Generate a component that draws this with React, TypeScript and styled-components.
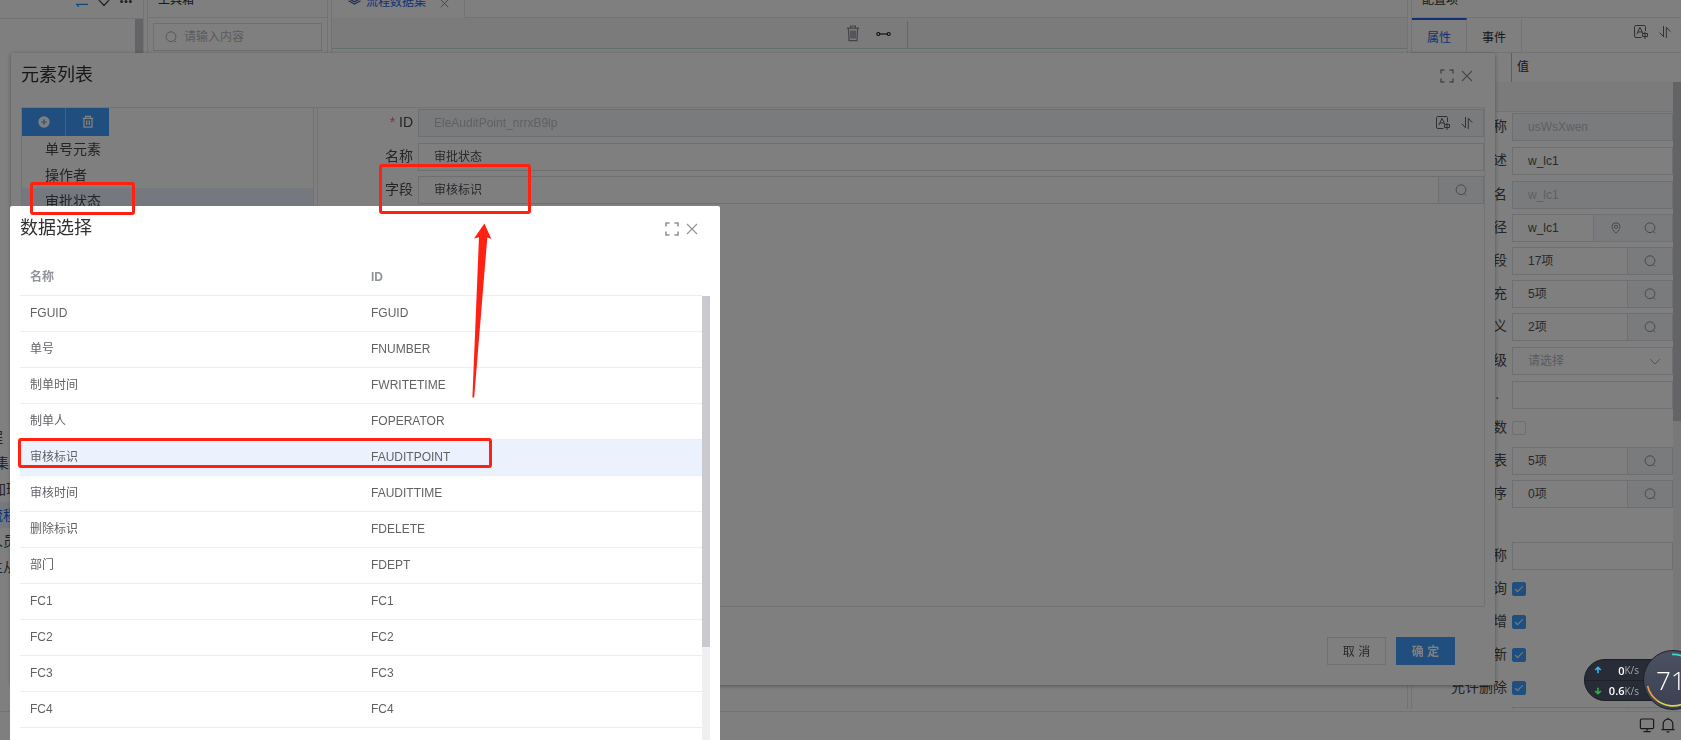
import React from 'react';
import styled, { createGlobalStyle, css } from 'styled-components';

const line = '#e4e7ed';
const fieldLine = '#dcdfe6';
const primary = '#409eff';
const accent = '#1e62eb';
const mark = '#ff2213';

const GlobalStyle = createGlobalStyle`
  *, *::before, *::after { box-sizing: border-box; }
  body {
    margin: 0;
    overflow: hidden;
    background: #fff;
    color: #303133;
    font-family: "Liberation Sans", "Noto Sans CJK SC", sans-serif;
    font-size: 12px;
  }
  button, input, select { font: inherit; color: inherit; margin: 0; }
  svg { display: block; flex: none; }
`;

const Shell = styled.div`
  display: flex;
  flex-direction: column;
  height: 100vh;
`;

const Workbench = styled.main`
  flex: 1;
  min-height: 0;
  display: flex;
  gap: 3px;
  padding-bottom: 2px;
`;

const Panel = styled.section<{ $width?: number; $edges: 'right' | 'both' | 'left' }>`
  display: flex;
  flex-direction: column;
  min-width: 0;
  overflow: hidden;
  ${(p) => (p.$width ? css`flex: none; width: ${p.$width}px;` : css`flex: 1;`)}
  ${(p) => p.$edges !== 'left' && css`border-right: 1px solid ${line};`}
  ${(p) => p.$edges !== 'right' && css`border-left: 1px solid ${line};`}
`;

const PanelHeader = styled.header<{ $tall?: boolean }>`
  flex: none;
  display: flex;
  align-items: flex-end;
  height: ${(p) => (p.$tall ? 19 : 18)}px;
  padding: 0 10px 10px;
  line-height: 14px;
  border-bottom: 1px solid ${line};
  overflow: hidden;
`;

const HeaderActions = styled.div`
  display: flex;
  align-items: flex-end;
  gap: 10px;
  margin-left: 66px;
  padding-bottom: 1px;
`;

const TreeArea = styled.div`
  flex: 1;
  min-height: 0;
  display: flex;
  justify-content: space-between;
  overflow: hidden;
`;

const TreeList = styled.ul`
  flex: 1;
  list-style: none;
  margin: 405px 0 0 -11px;
  padding: 0;
  font-size: 14px;
  color: #46484c;
`;

const TreeItem = styled.li<{ $indent?: number; $active?: boolean }>`
  height: 26px;
  line-height: 26px;
  white-space: nowrap;
  padding-left: ${(p) => p.$indent || 0}px;
  ${(p) => p.$active && css`background: #eaf2ff; color: ${accent};`}
`;

const ScrollTrack = styled.div<{ $top?: number }>`
  flex: none;
  width: 8px;
  margin-top: ${(p) => p.$top || 0}px;
  background: #f0f0f2;
`;

const ScrollThumb = styled.div<{ $length: number }>`
  height: ${(p) => p.$length}%;
  background: #c9c9cf;
`;

const SearchBox = styled.label`
  display: flex;
  align-items: center;
  gap: 6px;
  height: 28px;
  margin: 5px;
  padding: 0 10px;
  border: 1px solid ${fieldLine};
  color: #a8abb2;
`;

const BareInput = styled.input`
  flex: 1;
  min-width: 0;
  padding: 0;
  border: 0;
  outline: 0;
  background: none;
  line-height: 14px;
  &::placeholder { color: #b4b7be; }
`;

const TabStrip = styled.div`
  flex: none;
  display: flex;
  height: 18px;
`;

const FileTab = styled.button`
  display: flex;
  align-items: flex-end;
  gap: 4px;
  height: 18px;
  padding: 0 15px 9px;
  line-height: 14px;
  border: 0;
  border-right: 1px solid ${line};
  background: #fff;
  color: ${accent};
  white-space: nowrap;
`;

const TabClose = styled.span`
  margin-left: 10px;
  padding-bottom: 1px;
  color: #4080e0;
`;

const StripFill = styled.div`
  flex: 1;
  border-bottom: 1px solid ${line};
`;

const Toolbar = styled.div`
  flex: none;
  display: flex;
  justify-content: center;
  align-items: center;
  gap: 16px;
  height: 31px;
  padding: 3px 0 0 14px;
  background: #f7f7f7;
  border-bottom: 1px solid #cbd8df;
`;

const ToolButton = styled.button`
  display: flex;
  padding: 0 0 2px;
  border: 0;
  background: none;
  color: #444;
`;

const ToolDivider = styled.span`
  align-self: stretch;
  width: 1px;
  background: #c4ccd0;
`;

const PropTabs = styled.div`
  flex: none;
  display: flex;
  align-items: stretch;
  height: 35px;
  border-bottom: 1px solid ${line};
`;

const PropTab = styled.button<{ $active?: boolean }>`
  padding: 0 15px;
  border: 0;
  border-top: 2px solid ${(p) => (p.$active ? accent : 'transparent')};
  border-right: 1px solid ${line};
  background: none;
  color: ${(p) => (p.$active ? accent : '#303133')};
`;

const TabTools = styled.div`
  display: flex;
  align-items: center;
  gap: 10px;
  margin-left: auto;
  padding: 0 10px 6px 0;
  color: #606266;
`;

const ColumnTitles = styled.div`
  flex: none;
  display: grid;
  grid-template-columns: 100px 1fr;
  height: 29px;
  line-height: 28px;
`;

const ColumnTitle = styled.div`
  padding-left: 5px;
  &:first-child { border-right: 1px solid #bbb; }
`;

const PropBody = styled.div`
  flex: 1;
  min-height: 0;
  display: flex;
  overflow: hidden;
`;

const PropForm = styled.form`
  flex: 1;
  min-width: 0;
`;

const GroupBar = styled.div`
  height: 30px;
  background: #f7f7f7;
  border-bottom: 1px solid ${line};
`;

const GroupSpace = styled.div`
  height: 28px;
`;

const Row = styled.div<{ $plain?: boolean }>`
  display: grid;
  grid-template-columns: 95px minmax(0, 1fr);
  column-gap: 5px;
  padding: ${(p) => (p.$plain ? '1px 0 5px' : '0 0 5px')};
`;

const RowLabel = styled.label`
  font-size: 14px;
  line-height: 27px;
  text-align: right;
  white-space: nowrap;
  color: #46484c;
`;

const Star = styled.span`
  color: #f56c6c;
`;

const Field = styled.div<{ $disabled?: boolean }>`
  display: flex;
  height: 28px;
  border: 1px solid ${fieldLine};
  background: ${(p) => (p.$disabled ? '#f5f7fa' : '#fff')};
  color: ${(p) => (p.$disabled ? '#bcc0c8' : '#505256')};
`;

const FieldInput = styled(BareInput)`
  padding: 0 15px;
`;

const FieldSelect = styled.select`
  flex: 1;
  min-width: 0;
  padding: 0 15px;
  border: 0;
  outline: 0;
  appearance: none;
  background: none;
  color: #b4b7be;
`;

const FieldIcons = styled.div<{ $faint?: boolean }>`
  display: flex;
  align-items: center;
  gap: 10px;
  padding: 0 10px 1px 0;
  color: ${(p) => (p.$faint ? '#a8abb2' : '#606266')};
`;

const Append = styled.div`
  display: flex;
  align-items: center;
  gap: 20px;
  padding: 0 15px;
  border-left: 1px solid ${fieldLine};
  background: #f5f7fa;
  color: #909399;
`;

const IconButton = styled.button`
  display: flex;
  padding: 0;
  border: 0;
  background: none;
  color: inherit;
`;

const Tick = styled.input`
  appearance: none;
  position: relative;
  width: 14px;
  height: 14px;
  margin: 7px 0;
  border: 1px solid ${fieldLine};
  border-radius: 2px;
  background: #fff;
  &:checked {
    border-color: ${primary};
    background: ${primary};
  }
  &:checked::after {
    content: '';
    position: absolute;
    left: 4px;
    top: 1px;
    width: 4px;
    height: 8px;
    border: solid #fff;
    border-width: 0 1px 1px 0;
    transform: rotate(45deg);
  }
`;

const StatusBar = styled.footer`
  flex: none;
  display: flex;
  justify-content: flex-end;
  align-items: center;
  gap: 5px;
  height: 29px;
  padding: 0 5px 2px 0;
  border-top: 1px solid ${line};
`;

const ElementDialog = styled.section`
  position: fixed;
  inset: 53px 186px 55px 11px;
  display: flex;
  flex-direction: column;
  border-radius: 2px;
  background: #fff;
  box-shadow: 0 1px 4px rgba(0, 0, 0, 0.35);
`;

const DialogHeader = styled.header<{ $compact?: boolean }>`
  flex: none;
  display: flex;
  justify-content: space-between;
  height: ${(p) => (p.$compact ? 53 : 54)}px;
  padding: 0 22px 0 10px;
`;

const DialogTitle = styled.h2`
  margin: 0;
  font-size: 18px;
  font-weight: 400;
  line-height: 44px;
`;

const DialogTools = styled.div`
  display: flex;
  align-items: center;
  gap: 7px;
  height: 46px;
  color: #909399;
`;

const DialogBody = styled.div`
  flex: 1;
  min-height: 0;
  display: flex;
  gap: 3px;
  margin: 0 10px;
  border: 1px solid ${line};
`;

const ListPane = styled.div`
  flex: none;
  width: 292px;
  border-right: 1px solid ${line};
`;

const ButtonGroup = styled.div`
  display: inline-flex;
  gap: 1px;
  height: 28px;
  vertical-align: top;
  background: #8cc5ff;
`;

const GroupButton = styled.button`
  display: flex;
  align-items: center;
  justify-content: center;
  width: 43px;
  padding: 0;
  border: 0;
  background: ${primary};
  color: #fff;
`;

const ElementList = styled.ul`
  list-style: none;
  margin: 0;
  padding: 0;
  font-size: 14px;
  color: #46484c;
`;

const ElementItem = styled.li<{ $active?: boolean }>`
  height: 26px;
  line-height: 26px;
  padding-left: 23px;
  background: ${(p) => (p.$active ? '#eaf2ff' : 'none')};
`;

const DetailPane = styled.form`
  flex: 1;
  min-width: 0;
  border-left: 1px solid ${line};
`;

const DialogFooter = styled.footer`
  flex: none;
  display: flex;
  justify-content: flex-end;
  gap: 10px;
  padding: 30px 40px 20px;
`;

const Button = styled.button<{ $primary?: boolean }>`
  width: 59px;
  height: 28px;
  padding: 0 0 2px;
  border: 1px solid ${(p) => (p.$primary ? primary : fieldLine)};
  background: ${(p) => (p.$primary ? primary : '#fff')};
  color: ${(p) => (p.$primary ? '#fff' : '#505256')};
  font-weight: ${(p) => (p.$primary ? 700 : 400)};
`;

const Mask = styled.div`
  position: fixed;
  inset: 0;
  background: rgba(0, 0, 0, 0.5);
`;

const PickerDialog = styled.section`
  position: fixed;
  top: 206px;
  bottom: 0;
  left: 10px;
  width: 710px;
  display: flex;
  flex-direction: column;
  overflow: hidden;
  border-radius: 2px 2px 0 0;
  background: #fff;
`;

const PickerBody = styled.div`
  flex: 1;
  min-height: 0;
  display: flex;
  align-items: stretch;
  padding: 0 10px;
  overflow: hidden;
`;

const DataArea = styled.div`
  flex: 1;
  min-width: 0;
`;

const DataTable = styled.table`
  width: 100%;
  table-layout: fixed;
  border-collapse: separate;
  border-spacing: 0;
  line-height: 14px;
  color: #606266;
`;

const HeadCell = styled.th`
  height: 37px;
  padding: 0 10px;
  border-bottom: 1px solid #ebeef5;
  text-align: left;
  font-weight: 700;
  color: #909399;
`;

const DataRow = styled.tr<{ $active?: boolean }>`
  background: ${(p) => (p.$active ? '#ebf2fe' : '#fff')};
`;

const DataCell = styled.td`
  height: 36px;
  padding: 0 10px 2px;
  border-bottom: 1px solid #ebeef5;
`;

const Frame = styled.div<{ $x: number; $y: number; $w: number; $h: number }>`
  position: fixed;
  left: ${(p) => p.$x}px;
  top: ${(p) => p.$y}px;
  width: ${(p) => p.$w}px;
  height: ${(p) => p.$h}px;
  border: 3px solid ${mark};
  border-radius: 3px;
`;

const Arrow = styled.svg`
  position: fixed;
  left: 470px;
  top: 222px;
`;

const NetMonitor = styled.aside`
  position: fixed;
  right: 0;
  bottom: 30px;
  display: flex;
  align-items: center;
  width: 97px;
  height: 60px;
  overflow: hidden;
  font-family: "Open Sans", "Noto Sans", sans-serif;
`;

const NetPill = styled.div`
  flex: none;
  width: 80px;
  height: 42px;
  border: 1px solid #1a1d26;
  border-radius: 21px 0 0 21px;
  background: #272c36;
`;

const NetLine = styled.div`
  display: flex;
  align-items: center;
  height: 20px;
  padding: 0 24px 0 9px;
  color: #a3a7ae;
  font-size: 10px;
  & + & { border-top: 1px solid #1e222b; }
`;

const NetValue = styled.span`
  margin-left: auto;
  color: #fff;
  font-size: 11px;
  font-weight: 600;
`;

const NetDial = styled.div`
  position: absolute;
  left: 59px;
  top: 0;
  width: 60px;
  height: 60px;
  padding-left: 12px;
  border: 1px solid #1e2129;
  border-radius: 50%;
  background: linear-gradient(#4c5162, #3b4052);
  color: #fff;
  font-size: 26px;
  font-weight: 300;
  line-height: 58px;
`;

const DialRing = styled.svg`
  position: absolute;
  left: -1px;
  top: -1px;
`;

const stroke = { fill: 'none', stroke: 'currentColor', strokeWidth: 1 } as const;

const SearchIcon = ({ size = 14 }: { size?: number }) => (
  <svg width={size} height={size} viewBox="0 0 14 14" {...stroke} aria-hidden>
    <circle cx="7" cy="6.7" r="4.9" />
    <path d="M10.3 10.4 L12.2 12.3" />
  </svg>
);

const PinIcon = () => (
  <svg width="14" height="14" viewBox="0 0 14 14" {...stroke} aria-hidden>
    <path d="M7 12.3 C4.2 9.5 3 7.6 3 5.8 A4 4 0 0 1 11 5.8 C11 7.6 9.8 9.5 7 12.3 Z" />
    <circle cx="7" cy="5.8" r="1.6" />
  </svg>
);

const ChevronIcon = () => (
  <svg width="14" height="14" viewBox="0 0 14 14" {...stroke} aria-hidden>
    <path d="M2 5 L7 10 L12 5" />
  </svg>
);

const ExpandIcon = () => (
  <svg width="14" height="14" viewBox="0 0 14 14" fill="none" stroke="currentColor" strokeWidth="1.6" aria-hidden>
    <path d="M1 4.6 V1 H4.6 M9.4 1 H13 V4.6 M13 9.4 V13 H9.4 M4.6 13 H1 V9.4" />
  </svg>
);

const CloseIcon = ({ size = 12 }: { size?: number }) => (
  <svg width={size} height={size} viewBox="0 0 12 12" fill="none" stroke="currentColor" strokeWidth="1.1" aria-hidden>
    <path d="M1 1 L11 11 M11 1 L1 11" />
  </svg>
);

const TranslateIcon = () => (
  <svg width="16" height="16" viewBox="0 0 16 16" {...stroke} aria-hidden>
    <path d="M8.5 13.5 H3 A1.5 1.5 0 0 1 1.5 12 V2.5 A1.5 1.5 0 0 1 3 1.5 H11 A1.5 1.5 0 0 1 12.5 2.5 V7" />
    <path d="M3.8 10.2 L6.9 3.4 L9.8 9 M5 8 H9" />
    <path d="M9.5 9.5 H14.5 V12.5 H9.5 Z M12 7.8 V15" />
  </svg>
);

const SortIcon = () => (
  <svg width="12" height="14" viewBox="0 0 12 14" {...stroke} aria-hidden>
    <path d="M4.5 1 V11.8 L0.8 7.6 M7.3 13 V2.2 L11.2 6.6" />
  </svg>
);

const TrashSolid = () => (
  <svg width="12" height="14" viewBox="0 0 12 14" fill="none" stroke="currentColor" strokeWidth="1.3" aria-hidden>
    <path d="M0.8 3.4 H11.2 M3.6 3 V1.4 H8.4 V3 M2 3.6 V12.2 H10 V3.6 M4.7 5.6 V10 M7.3 5.6 V10" />
  </svg>
);

const PlusCircle = () => (
  <svg width="12" height="12" viewBox="0 0 12 12" aria-hidden>
    <circle cx="6" cy="6" r="5.7" fill="#fff" />
    <path d="M3.3 6 H8.7 M6 3.3 V8.7" stroke={primary} strokeWidth="1.2" />
  </svg>
);

type ValueRowProps = {
  id: string;
  label: React.ReactNode;
  value?: string;
  disabled?: boolean;
  search?: boolean;
  pin?: boolean;
  tools?: boolean;
};

const ValueRow = ({ id, label, value = '', disabled, search, pin, tools }: ValueRowProps) => (
  <Row $plain={!search}>
    <RowLabel htmlFor={id}>{label}</RowLabel>
    <Field $disabled={disabled}>
      <FieldInput id={id} defaultValue={value} readOnly={disabled} />
      {tools && (
        <FieldIcons>
          <TranslateIcon />
          <SortIcon />
        </FieldIcons>
      )}
      {search && (
        <Append>
          {pin && (
            <IconButton type="button" aria-label="定位"><PinIcon /></IconButton>
          )}
          <IconButton type="button" aria-label="选择"><SearchIcon /></IconButton>
        </Append>
      )}
    </Field>
  </Row>
);

const TickRow = ({ id, label, checked }: { id: string; label: string; checked?: boolean }) => (
  <Row>
    <RowLabel htmlFor={id}>{label}</RowLabel>
    <Tick id={id} type="checkbox" defaultChecked={checked} />
  </Row>
);

const fields = [
  ['FGUID', 'FGUID'],
  ['单号', 'FNUMBER'],
  ['制单时间', 'FWRITETIME'],
  ['制单人', 'FOPERATOR'],
  ['审核标识', 'FAUDITPOINT'],
  ['审核时间', 'FAUDITTIME'],
  ['删除标识', 'FDELETE'],
  ['部门', 'FDEPT'],
  ['FC1', 'FC1'],
  ['FC2', 'FC2'],
  ['FC3', 'FC3'],
  ['FC4', 'FC4'],
];

const WindowTools = () => (
  <DialogTools>
    <IconButton type="button" aria-label="最大化"><ExpandIcon /></IconButton>
    <IconButton type="button" aria-label="关闭"><CloseIcon /></IconButton>
  </DialogTools>
);

export default function App() {
  return (
    <>
      <GlobalStyle />
      <Shell>
        <Workbench>
          <Panel $width={144} $edges="right">
            <PanelHeader $tall>
              <HeaderActions>
                <svg width="12" height="12" viewBox="0 0 12 12" fill="none" stroke="#2d8cf0" strokeWidth="1.2" aria-hidden>
                  <path d="M0 3 H12 L9 0 M12 9.4 H0.6 L3 11.6" />
                </svg>
                <svg width="12" height="12" viewBox="0 0 12 12" fill="none" stroke="#444" strokeWidth="1.2" aria-hidden>
                  <path d="M1 5 L6 10.5 L11 5 L6 0 Z" />
                </svg>
                <svg width="12" height="12" viewBox="0 0 12 12" fill="#444" aria-hidden>
                  <circle cx="1.6" cy="6.6" r="1.5" />
                  <circle cx="6" cy="6.6" r="1.5" />
                  <circle cx="10.4" cy="6.6" r="1.5" />
                </svg>
              </HeaderActions>
            </PanelHeader>
            <TreeArea>
              <TreeList>
                <TreeItem>程</TreeItem>
                <TreeItem $indent={6}>集</TreeItem>
                <TreeItem $indent={3}>加班</TreeItem>
                <TreeItem $active>流程</TreeItem>
                <TreeItem>人员</TreeItem>
                <TreeItem>主从</TreeItem>
              </TreeList>
              <ScrollTrack><ScrollThumb $length={30} /></ScrollTrack>
            </TreeArea>
          </Panel>

          <Panel $width={181} $edges="both">
            <PanelHeader>工具箱</PanelHeader>
            <SearchBox>
              <SearchIcon />
              <BareInput placeholder="请输入内容" />
            </SearchBox>
          </Panel>

          <Panel $edges="both">
            <TabStrip>
              <FileTab>
                <svg width="15" height="16" viewBox="0 0 15 16" fill="none" stroke="#4a57a8" strokeWidth="1.2" aria-hidden>
                  <path d="M1.5 3.4 L7.5 0.6 L13.5 3.4 L7.5 6.6 Z M1.5 5.6 L7.5 8.8 L13.5 5.6 M1.5 7.8 L7.5 11 L13.5 7.8" />
                </svg>
                流程数据集
                <TabClose><CloseIcon size={9} /></TabClose>
              </FileTab>
              <StripFill />
            </TabStrip>
            <Toolbar>
              <ToolButton aria-label="删除">
                <svg width="14" height="17" viewBox="0 0 14 17" fill="none" stroke="#888" strokeWidth="1.2" aria-hidden>
                  <path d="M1 3.2 H13 M4.6 3 V1 H9.4 V3 M2.4 3.6 L3 15.6 H11 L11.6 3.6" />
                  <path d="M5 5.5 V13.5 M9 5.5 V13.5" stroke="#5a86a8" />
                  <path d="M7 5.5 V13.5" stroke="#a06a5a" />
                </svg>
              </ToolButton>
              <ToolButton aria-label="连线">
                <svg width="15" height="6" viewBox="0 0 15 6" fill="none" stroke="#222" strokeWidth="1.2" aria-hidden>
                  <circle cx="2.3" cy="3" r="1.5" />
                  <circle cx="12.7" cy="3" r="1.5" />
                  <path d="M4 3 H11" />
                </svg>
              </ToolButton>
              <ToolDivider />
            </Toolbar>
          </Panel>

          <Panel $width={270} $edges="left">
            <PanelHeader>配置项</PanelHeader>
            <PropTabs>
              <PropTab $active>属性</PropTab>
              <PropTab>事件</PropTab>
              <TabTools>
                <TranslateIcon />
                <SortIcon />
              </TabTools>
            </PropTabs>
            <ColumnTitles>
              <ColumnTitle />
              <ColumnTitle>值</ColumnTitle>
            </ColumnTitles>
            <PropBody>
              <PropForm>
                <GroupBar />
                <ValueRow id="p-name" label="称" value="usWsXwen" disabled />
                <ValueRow id="p-desc" label="述" value="w_lc1" />
                <ValueRow id="p-alias" label="名" value="w_lc1" disabled />
                <ValueRow id="p-path" label="径" value="w_lc1" search pin />
                <ValueRow id="p-field" label="段" value="17项" search />
                <ValueRow id="p-fill" label="充" value="5项" search />
                <ValueRow id="p-define" label="义" value="2项" search />
                <Row $plain>
                  <RowLabel htmlFor="p-level">级</RowLabel>
                  <Field>
                    <FieldSelect id="p-level"><option>请选择</option></FieldSelect>
                    <FieldIcons $faint><ChevronIcon /></FieldIcons>
                  </Field>
                </Row>
                <ValueRow id="p-more" label={'.\u00a0\u00a0'} />
                <TickRow id="p-param" label="数" />
                <ValueRow id="p-table" label="表" value="5项" search />
                <ValueRow id="p-order" label="序" value="0项" search />
                <GroupSpace />
                <ValueRow id="p-title" label="称" />
                <TickRow id="p-query" label="询" checked />
                <TickRow id="p-add" label="增" checked />
                <TickRow id="p-update" label="新" checked />
                <TickRow id="p-delete" label="允许删除" checked />
                <ValueRow id="p-last" label="" search />
              </PropForm>
              <ScrollTrack><ScrollThumb $length={54} /></ScrollTrack>
            </PropBody>
          </Panel>
        </Workbench>

        <StatusBar>
          <svg width="16" height="16" viewBox="0 0 16 16" fill="none" stroke="#333" strokeWidth="1.2" aria-hidden>
            <rect x="1.4" y="2" width="13.2" height="9.6" rx="1.2" />
            <path d="M8 11.6 V14.4 M4.4 14.6 H11.6" />
          </svg>
          <svg width="16" height="16" viewBox="0 0 16 16" fill="none" stroke="#333" strokeWidth="1.2" aria-hidden>
            <path d="M1.4 12.6 H14.6 M3.2 12.4 V7 A4.8 4.8 0 0 1 12.8 7 V12.4 M8 2 V0.8 M6.6 14.8 H9.4" />
          </svg>
        </StatusBar>
      </Shell>

      <ElementDialog role="dialog" aria-labelledby="elements-title">
        <DialogHeader>
          <DialogTitle id="elements-title">元素列表</DialogTitle>
          <WindowTools />
        </DialogHeader>
        <DialogBody>
          <ListPane>
            <ButtonGroup>
              <GroupButton aria-label="新增"><PlusCircle /></GroupButton>
              <GroupButton aria-label="删除"><TrashSolid /></GroupButton>
            </ButtonGroup>
            <ElementList>
              <ElementItem>单号元素</ElementItem>
              <ElementItem>操作者</ElementItem>
              <ElementItem $active>审批状态</ElementItem>
            </ElementList>
          </ListPane>
          <DetailPane>
            <ValueRow id="e-id" label={<><Star>*</Star> ID</>} value="EleAuditPoint_nrrxB9lp" disabled tools />
            <ValueRow id="e-name" label="名称" value="审批状态" />
            <ValueRow id="e-field" label="字段" value="审核标识" search />
          </DetailPane>
        </DialogBody>
        <DialogFooter>
          <Button>取 消</Button>
          <Button $primary>确 定</Button>
        </DialogFooter>
      </ElementDialog>

      <Mask />

      <PickerDialog role="dialog" aria-labelledby="picker-title">
        <DialogHeader $compact>
          <DialogTitle id="picker-title">数据选择</DialogTitle>
          <WindowTools />
        </DialogHeader>
        <PickerBody>
          <DataArea>
            <DataTable>
              <thead>
                <tr>
                  <HeadCell>名称</HeadCell>
                  <HeadCell>ID</HeadCell>
                </tr>
              </thead>
              <tbody>
                {fields.map(([name, id]) => (
                  <DataRow key={id} $active={id === 'FAUDITPOINT'}>
                    <DataCell>{name}</DataCell>
                    <DataCell>{id}</DataCell>
                  </DataRow>
                ))}
              </tbody>
            </DataTable>
          </DataArea>
          <ScrollTrack $top={37}><ScrollThumb $length={79} /></ScrollTrack>
        </PickerBody>
      </PickerDialog>

      <Frame $x={30} $y={182} $w={105} $h={33} />
      <Frame $x={379} $y={164} $w={152} $h={50} />
      <Frame $x={18} $y={438} $w={474} $h={30} />
      <Arrow width="24" height="178" viewBox="0 0 24 178" aria-hidden>
        <path d="M14.4 1.5 L21.4 17 L17.3 15.6 L4.2 175.6 L2.4 175.6 L9 15.2 L4 16.6 Z" fill={mark} />
      </Arrow>

      <NetMonitor>
        <NetPill>
          <NetLine>
            <svg width="8" height="8" viewBox="0 0 10 10" fill="none" stroke="#3eb4f5" strokeWidth="2" aria-hidden>
              <path d="M5 9 V2 M1.5 5 L5 1.6 L8.5 5" />
            </svg>
            <NetValue>0</NetValue>K/s
          </NetLine>
          <NetLine>
            <svg width="8" height="8" viewBox="0 0 10 10" fill="none" stroke="#2fb344" strokeWidth="2" aria-hidden>
              <path d="M5 1 V8 M1.5 5 L5 8.4 L8.5 5" />
            </svg>
            <NetValue>0.6</NetValue>K/s
          </NetLine>
        </NetPill>
        <NetDial>
          71
          <DialRing width="60" height="60" viewBox="0 0 60 60" fill="none" strokeWidth="1.6" aria-hidden>
            <path d="M4.6 36 A26 26 0 0 0 14 50.4" stroke="#f0a040" />
            <path d="M14 50.4 A26 26 0 0 0 40 53.8" stroke="#d8d848" />
            <path d="M29 4.4 A26 26 0 0 1 42 7.2" stroke="#3fd8c8" />
          </DialRing>
        </NetDial>
      </NetMonitor>
    </>
  );
}
